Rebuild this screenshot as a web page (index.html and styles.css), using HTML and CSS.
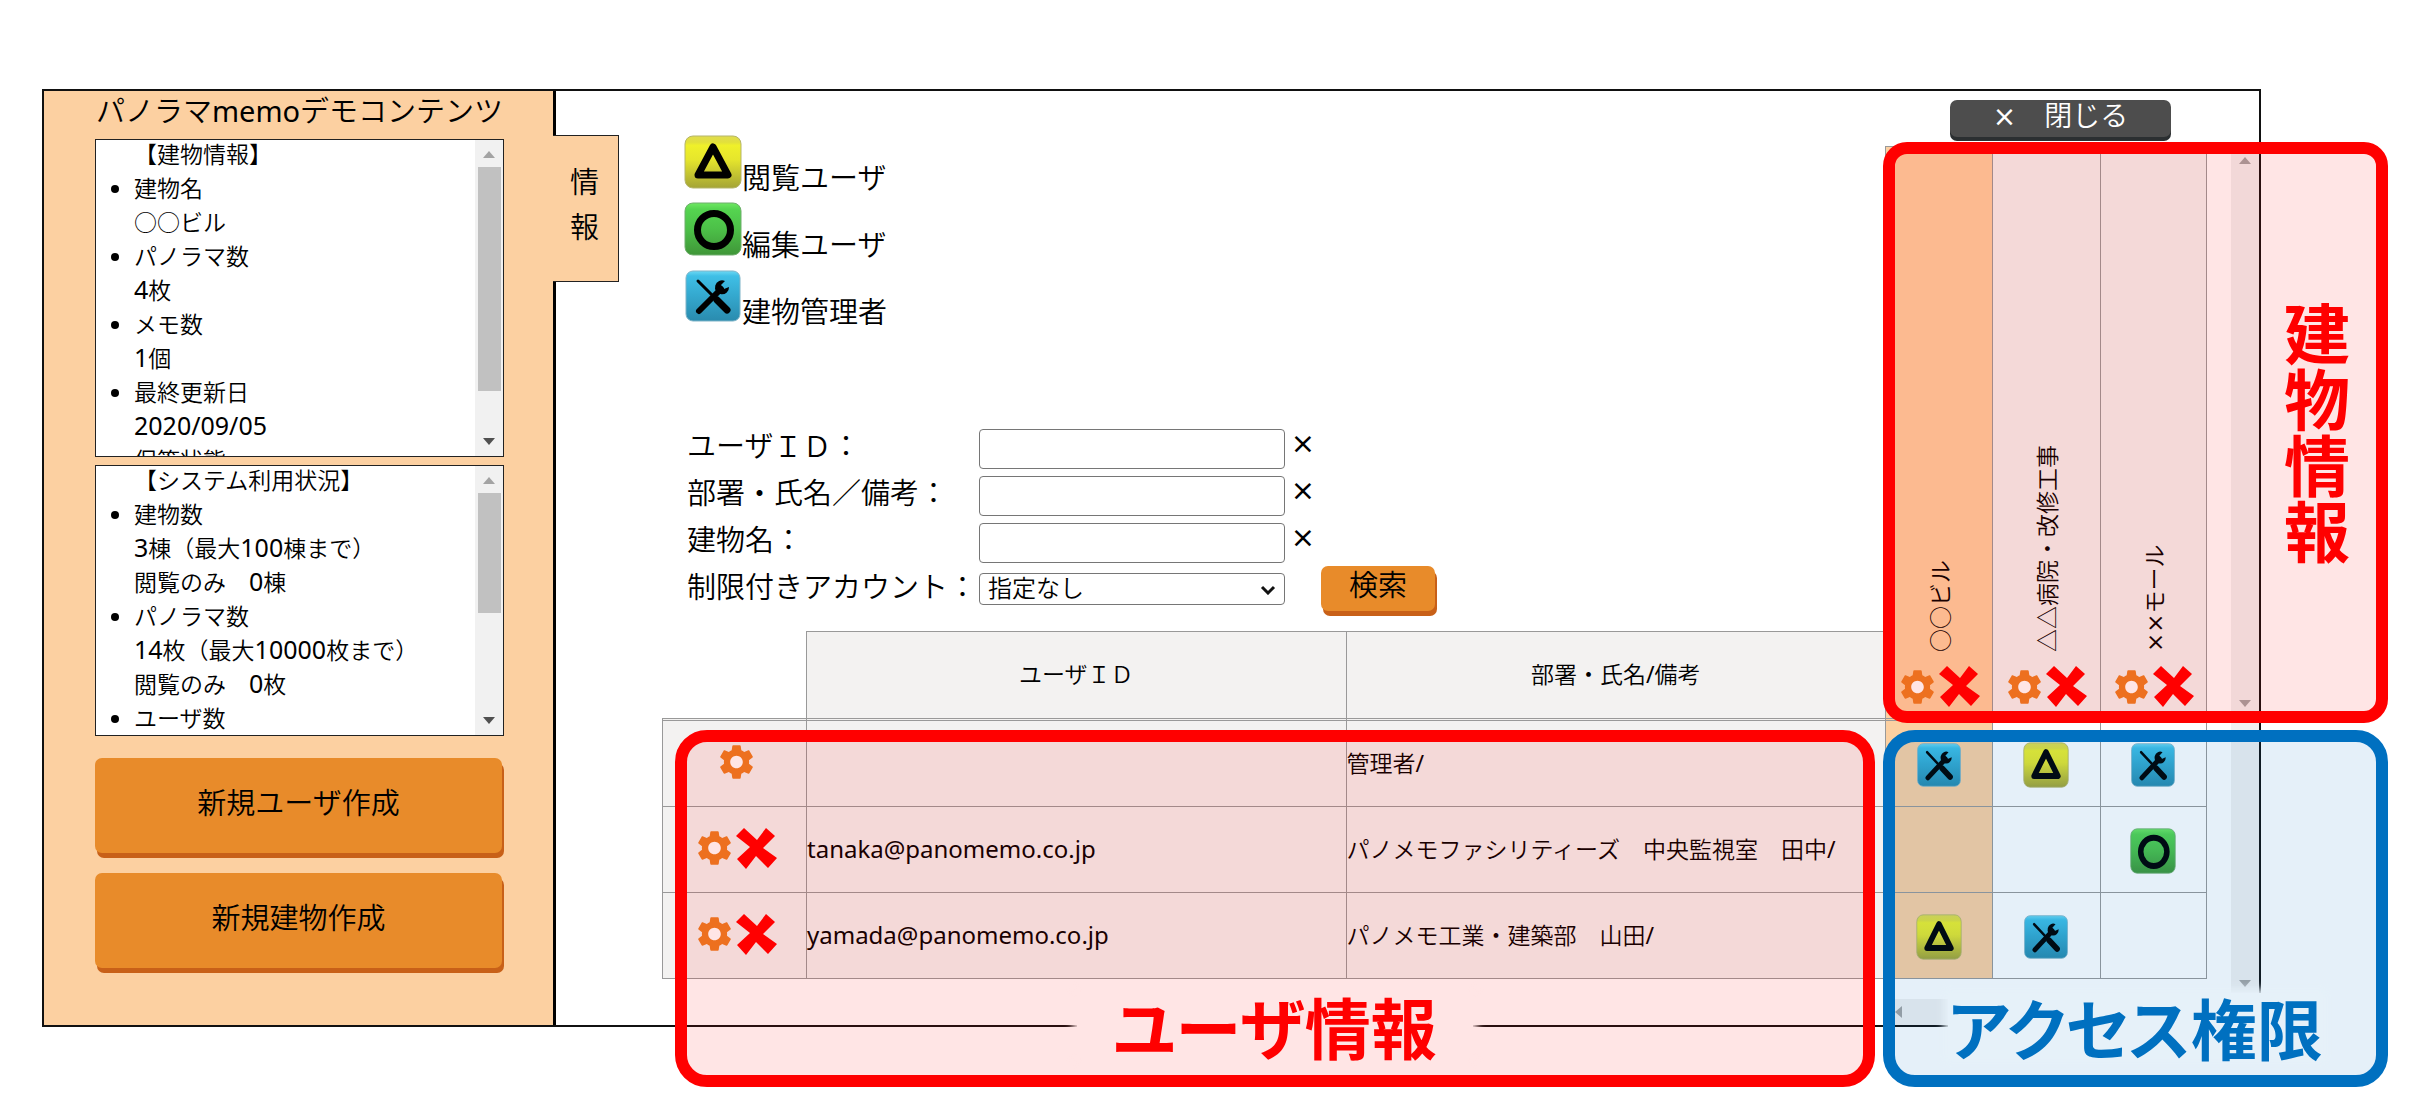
FILE: index.html
```html
<!DOCTYPE html>
<html lang="ja">
<head>
<meta charset="utf-8">
<title>パノラマmemo</title>
<link rel="stylesheet" href="styles.css">
</head>
<body>
<svg class="defs" aria-hidden="true">
  <defs>
    <linearGradient id="g-yellow" x1="0" y1="0" x2="0" y2="1"><stop offset="0" stop-color="#e0dc50"/><stop offset=".12" stop-color="#e2e03c"/><stop offset=".18" stop-color="#eff02a"/><stop offset=".45" stop-color="#e6e62c"/><stop offset="1" stop-color="#a4a436"/></linearGradient>
    <linearGradient id="g-green" x1="0" y1="0" x2="0" y2="1"><stop offset="0" stop-color="#6ee862"/><stop offset=".12" stop-color="#55d450"/><stop offset=".5" stop-color="#4cc048"/><stop offset="1" stop-color="#3f9638"/></linearGradient>
    <linearGradient id="g-blue" x1="0" y1="0" x2="0" y2="1"><stop offset="0" stop-color="#6cd8f4"/><stop offset=".1" stop-color="#3fbfe6"/><stop offset=".5" stop-color="#34a8ce"/><stop offset="1" stop-color="#2a8bae"/></linearGradient>
    <symbol id="i-view" viewBox="0 0 58 54" preserveAspectRatio="none">
      <rect x="1" y="1" width="56" height="52" rx="8" fill="url(#g-yellow)" stroke="#b5b56a"/>
      <path d="M29 12 L44 40 H14 Z" fill="none" stroke="#000" stroke-width="7" stroke-linejoin="round"/>
    </symbol>
    <symbol id="i-edit" viewBox="0 0 58 54" preserveAspectRatio="none">
      <rect x="1" y="1" width="56" height="52" rx="8" fill="url(#g-green)" stroke="#6fae6c"/>
      <circle cx="30" cy="28" r="16.500" fill="none" stroke="#000" stroke-width="7"/>
    </symbol>
    <symbol id="i-admin" viewBox="0 0 58 54" preserveAspectRatio="none">
      <rect x="2" y="2" width="54" height="50" rx="7" fill="url(#g-blue)" stroke="#7fb4c8"/>
      <path d="M14 12 L28 26" stroke="#000" stroke-width="3" stroke-linecap="round"/>
      <path d="M33 31 L43 41" stroke="#000" stroke-width="7" stroke-linecap="round"/>
      <path d="M15 42 L37 20" stroke="#000" stroke-width="6" stroke-linecap="round"/>
      <path d="M41 12 A7 7 0 1 0 45 18 L40 20 L37 16 Z" fill="#000"/>
    </symbol>
    <symbol id="i-gear" viewBox="2 2 20 20">
      <circle cx="12" cy="12" r="5" fill="#fff"/>
      <path fill="#eb7d23" d="M19.140 12.940c.04-.3.06-.61.06-.94 0-.32-.02-.64-.07-.94l2.030-1.580c.18-.14.23-.41.12-.61l-1.920-3.320c-.12-.22-.37-.29-.59-.22l-2.390.96c-.5-.38-1.030-.7-1.620-.94l-.36-2.540c-.04-.24-.24-.41-.48-.41h-3.840c-.24 0-.43.17-.47.41l-.36 2.540c-.59.24-1.130.57-1.620.94l-2.390-.96c-.22-.08-.47 0-.59.22L2.740 8.870c-.12.21-.08.47.12.61l2.030 1.580c-.05.3-.09.63-.09.94s.02.64.07.94l-2.030 1.580c-.18.14-.23.41-.12.61l1.920 3.320c.12.22.37.29.59.22l2.390-.96c.5.38 1.030.7 1.620.94l.36 2.540c.05.24.24.41.48.41h3.840c.24 0 .44-.17.47-.41l.36-2.540c.59-.24 1.130-.56 1.620-.94l2.390.96c.22.08.47 0 .59-.22l1.920-3.320c.12-.22.07-.47-.12-.61l-2.010-1.580zM12 15.600c-1.980 0-3.600-1.620-3.600-3.600s1.620-3.600 3.600-3.600 3.600 1.620 3.600 3.600-1.620 3.600-3.600 3.600z"/>
    </symbol>
    <symbol id="i-del" viewBox="0 0 41 41">
      <path fill="#f00" d="M8 0 L21 12 L30 0 L39 8 L27 20 L41 30 L32 40 L20 28 L10 41 L1 31 L14 19 L0 8 Z"/>
    </symbol>
  </defs>
</svg>

<div class="frame">
  <aside class="side">
    <h1 class="side-title">パノラマmemoデモコンテンツ</h1>
    <section class="panel panel-building">
      <ul class="panel-list">
        <li class="plain">【建物情報】</li>
        <li>建物名<br>○○ビル</li>
        <li>パノラマ数<br><span class="num">4</span>枚</li>
        <li><span class="strong">メモ</span>数<br><span class="num">1</span>個</li>
        <li>最終更新日<br><span class="num">2020/09/05</span></li>
        <li class="plain">保管状態</li>
      </ul>
      <div class="scroll"><i class="up"></i><b class="thumb thumb-long"></b><i class="down"></i></div>
    </section>
    <section class="panel panel-usage">
      <ul class="panel-list">
        <li class="plain">【システム利用状況】</li>
        <li>建物数<br><span class="num">3</span>棟（最大<span class="num">100</span>棟まで）<br>閲覧のみ　<span class="num">0</span>棟</li>
        <li>パノラマ数<br><span class="num">14</span>枚（最大<span class="num">10000</span>枚まで）<br>閲覧のみ　<span class="num">0</span>枚</li>
        <li>ユーザ数</li>
      </ul>
      <div class="scroll"><i class="up"></i><b class="thumb thumb-short"></b><i class="down"></i></div>
    </section>
    <button class="btn btn-big" type="button">新規ユーザ作成</button>
    <button class="btn btn-big" type="button">新規建物作成</button>
    <button class="tab" type="button">情報</button>
  </aside>

  <main class="main">
    <div class="left">
      <ul class="legend">
        <li><svg class="legend-icon"><use href="#i-view"/></svg><span>閲覧ユーザ</span></li>
        <li><svg class="legend-icon"><use href="#i-edit"/></svg><span>編集ユーザ</span></li>
        <li><svg class="legend-icon"><use href="#i-admin"/></svg><span>建物管理者</span></li>
      </ul>
      <form class="search">
        <label for="uid">ユーザＩＤ：</label><input id="uid" type="text"><button class="clear" type="button" aria-label="ユーザＩＤをクリア">×</button>
        <label for="dept">部署・氏名／備考：</label><input id="dept" type="text"><button class="clear" type="button" aria-label="部署をクリア">×</button>
        <label for="bld">建物名：</label><input id="bld" type="text"><button class="clear" type="button" aria-label="建物名をクリア">×</button>
        <label for="lim">制限付きアカウント：</label>
        <div class="select"><select id="lim"><option>指定なし</option></select><svg viewBox="0 0 16 10"><path d="M2 2 L8 8 L14 2" fill="none" stroke="#111" stroke-width="3"/></svg></div>
        <button class="btn btn-search" type="button">検索</button>
      </form>
      <div class="users">
        <table class="user-table">
          <colgroup><col class="c-act"><col><col></colgroup>
          <thead><tr><td class="blank"></td><th>ユーザＩＤ</th><th>部署・氏名/備考</th></tr></thead>
          <tbody>
            <tr><td class="act"><button type="button" aria-label="設定"><svg class="gear"><use href="#i-gear"/></svg></button></td><td></td><td>管理者/</td></tr>
            <tr><td class="act"><button type="button" aria-label="設定"><svg class="gear"><use href="#i-gear"/></svg></button><button type="button" aria-label="削除"><svg class="del"><use href="#i-del"/></svg></button></td><td class="mail">tanaka@panomemo.co.jp</td><td>パノメモファシリティーズ　中央監視室　田中/</td></tr>
            <tr><td class="act"><button type="button" aria-label="設定"><svg class="gear"><use href="#i-gear"/></svg></button><button type="button" aria-label="削除"><svg class="del"><use href="#i-del"/></svg></button></td><td class="mail">yamada@panomemo.co.jp</td><td>パノメモ工業・建築部　山田/</td></tr>
          </tbody>
        </table>
        <div class="mark mark-user"><span class="mark-label">ユーザ情報</span></div>
      </div>
    </div>

    <div class="right">
      <button class="close" type="button"><span class="x">×</span>　閉じる</button>
      <div class="matrix">
        <div class="matrix-row">
          <table class="perm-table">
            <thead><tr>
              <th class="cur"><div class="bld"><span class="bld-name">○○ビル</span><span class="bld-act"><button type="button" aria-label="設定"><svg class="gear"><use href="#i-gear"/></svg></button><button type="button" aria-label="削除"><svg class="del"><use href="#i-del"/></svg></button></span></div></th>
              <th><div class="bld"><span class="bld-name">△△病院・改修工事</span><span class="bld-act"><button type="button" aria-label="設定"><svg class="gear"><use href="#i-gear"/></svg></button><button type="button" aria-label="削除"><svg class="del"><use href="#i-del"/></svg></button></span></div></th>
              <th><div class="bld"><span class="bld-name"><span class="x">××</span>モール</span><span class="bld-act"><button type="button" aria-label="設定"><svg class="gear"><use href="#i-gear"/></svg></button><button type="button" aria-label="削除"><svg class="del"><use href="#i-del"/></svg></button></span></div></th>
            </tr></thead>
            <tbody>
              <tr><td class="cur"><svg class="perm"><use href="#i-admin"/></svg></td><td><svg class="perm"><use href="#i-view"/></svg></td><td><svg class="perm"><use href="#i-admin"/></svg></td></tr>
              <tr><td class="cur"></td><td></td><td><svg class="perm"><use href="#i-edit"/></svg></td></tr>
              <tr><td class="cur"><svg class="perm"><use href="#i-view"/></svg></td><td><svg class="perm"><use href="#i-admin"/></svg></td><td></td></tr>
            </tbody>
          </table>
          <div class="tracks">
            <div class="track track-head"><i class="up"></i><i class="down"></i></div>
            <div class="track track-body"><i class="down"></i></div>
          </div>
        </div>
        <div class="track-x"><i class="back"></i></div>
        <div class="mark mark-building"><span class="mark-label">建物情報</span></div>
        <div class="mark mark-access"><span class="mark-label">アクセス権限</span></div>
      </div>
    </div>
  </main>
</div>
</body>
</html>
```
FILE: styles.css
```css
* { box-sizing: border-box; }
body {
  margin: 0;
  padding: 89px 155px 92px 42px;
  background: #fff;
  color: #000;
  font-family: "Noto Sans", "Noto Sans CJK JP DemiLight", "Noto Sans CJK JP Light", "Noto Sans CJK JP", sans-serif;
  font-size: 23px;
  font-weight: 400;
}
button, input, select { font: inherit; color: inherit; }
button { padding: 0; border: 0; background: none; cursor: pointer; }
ul { margin: 0; padding: 0; }
.defs { position: absolute; width: 0; height: 0; }
.x { font-family: "DejaVu Sans", sans-serif; }

.frame { display: flex; border: 2px solid #111; }

/* sidebar */
.side {
  position: relative;
  flex: 0 0 512px;
  display: flex;
  flex-direction: column;
  padding: 0 49px 56px 51px;
  background: #fcd0a1;
  border-right: 3px solid #000;
}
.side-title {
  margin: 0;
  height: 48px;
  font-size: 29px;
  font-weight: 400;
  line-height: 40px;
  text-align: center;
  white-space: nowrap;
}
.panel {
  display: flex;
  background: #fff;
  border: 1px solid #222;
  overflow: hidden;
}
.panel-building { height: 318px; }
.panel-usage { height: 271px; margin-top: 8px; }
.panel-list { flex: 1; margin-top: -3px; padding-left: 38px; line-height: 34px; white-space: nowrap; }
.panel-list .plain { list-style: none; }
.strong { font-weight: 500; }
.num { font-size: 25px; line-height: 30px; }
.scroll {
  display: flex;
  flex-direction: column;
  align-items: center;
  width: 28px;
  padding: 11px 0;
  background: #f1f1f1;
}
.up, .down { border: 6px solid transparent; width: 0; height: 0; }
.up { border-top: 0; border-bottom: 7px solid #a3a3a3; }
.down { border-bottom: 0; border-top: 7px solid #505050; }
.scroll .down { margin-top: auto; }
.thumb { width: 23px; margin-top: 9px; background: #c1c1c1; }
.thumb-long { height: 224px; }
.thumb-short { height: 120px; }
.tab {
  position: absolute;
  top: 44px;
  left: 509px;
  width: 66px;
  height: 147px;
  padding: 0 19px 9px 17px;
  border: 1px solid #222;
  border-left: 0;
  background: #fcd0a1;
  font-size: 29px;
  line-height: 45px;
  word-break: break-all;
}

.btn {
  background: #e88b2a;
  border-radius: 7px;
  box-shadow: 2px 5px 0 #c86018;
}
.btn-big { height: 95px; margin: 22px 2px 0 0; padding-bottom: 10px; font-size: 29px; }
.btn-big + .btn-big { margin-top: 20px; }

/* main area */
.main { flex: 1; display: flex; padding-left: 106px; }
.left { flex: 1; padding-top: 44px; }
.legend { list-style: none; padding-left: 22px; font-size: 29px; }
.legend li { display: flex; height: 67px; }
.legend span { padding-top: 24px; line-height: 38px; }
.legend-icon { width: 58px; height: 54px; }

.search {
  display: grid;
  grid-template-columns: 292px 306px 36px 114px;
  grid-template-rows: repeat(4, 40px);
  row-gap: 7px;
  margin: 93px 0 21px 25px;
  font-size: 29px;
}
.search label { grid-column: 1; line-height: 34px; white-space: nowrap; }
.search input {
  height: 40px;
  padding: 0 8px;
  border: 1px solid #767676;
  border-radius: 4px;
  font-size: 23px;
}
.clear { align-self: start; font: 400 29px/28px "DejaVu Sans", sans-serif; }
.select { position: relative; align-self: start; height: 32px; margin-top: 3px; }
.select select {
  display: block;
  width: 100%;
  height: 100%;
  padding: 0 8px 2px;
  border: 1px solid #767676;
  border-radius: 4px;
  background: #fff;
  appearance: none;
  font-size: 24px;
  line-height: 28px;
}
.select svg { position: absolute; right: 9px; top: 12px; width: 16px; height: 10px; pointer-events: none; }
.btn-search { grid-column: 4; height: 45px; margin-top: -4px; padding-bottom: 8px; line-height: 36px; }

/* tables */
table { border-collapse: separate; border-spacing: 0; table-layout: fixed; }
th, td { padding: 0; font-weight: 400; }
.users { position: relative; }
.user-table { width: 100%; }
.c-act { width: 144px; }
.user-table th { height: 87px; padding-bottom: 5px; background: #f3f2f1; border: 1px solid #999; border-width: 1px 0 0 1px; }
.user-table tbody td { height: 86px; padding-bottom: 3px; background: #f3f2f1; border: 1px solid #999; border-width: 0 0 1px 1px; white-space: nowrap; }
.user-table tbody tr:first-child td,
.perm-table tbody tr:first-child td { height: 89px; border-top: 3px double #999; }
.user-table .mail { font-size: 24px; }
.user-table tbody .act { padding-left: 4px; text-align: center; }
.act button, .bld-act button { display: inline-block; vertical-align: middle; line-height: 0; }
.act button + button, .bld-act button + button { margin-left: 4px; }
.gear { width: 35px; height: 36px; }
.del { width: 41px; height: 41px; }

.right { flex: 0 0 374px; padding-top: 9px; }
.close {
  display: block;
  width: 221px;
  height: 37px;
  margin: 0 0 9px 65px;
  padding-bottom: 6px;
  border-radius: 7px;
  background: #4d4d4d;
  box-shadow: 0 4px 0 #2b2f31;
  color: #fff;
  font-size: 28px;
  line-height: 30px;
}
.matrix { position: relative; }
.matrix-row { display: flex; justify-content: space-between; }
.perm-table { width: 322px; }
.perm-table th { height: 572px; background: #f3f2f1; border: 1px solid #999; border-width: 1px 0 0 1px; vertical-align: bottom; }
.perm-table td { height: 86px; padding-top: 3px; border: 1px solid #999; border-width: 0 0 1px 1px; text-align: center; line-height: 0; }
.perm-table th:last-child, .perm-table td:last-child { border-right-width: 1px; }
.perm-table .cur { background: #fcd0a1; }
.perm { width: 46px; height: 46px; }
.bld { display: flex; flex-direction: column; align-items: center; gap: 14px; padding: 0 0 11px 2px; }
.bld-name { width: 32px; height: 32px; line-height: 32px; text-align: left; white-space: nowrap; transform: rotate(-90deg); }
.bld-act { white-space: nowrap; line-height: 0; }

.tracks { display: flex; flex-direction: column; }
.track { display: flex; flex-direction: column; align-items: center; width: 28px; background: #f1f1f1; }
.track-head { height: 572px; padding: 11px 0; }
.track-head .down { margin-top: auto; border-top-color: #a3a3a3; }
.track-body { flex: 1; margin-bottom: -20px; justify-content: flex-end; padding-bottom: 12px; }
.track-body .down { border-top-color: #a3a3a3; }
.track-x { display: flex; align-items: center; width: 345px; height: 26px; margin-top: 20px; padding-left: 10px; background: #f1f1f1; }
.back { border: 6px solid transparent; border-left: 0; border-right: 7px solid #a3a3a3; }

/* callouts over the tables */
.mark { position: absolute; display: flex; justify-content: center; border: 12px solid; border-radius: 32px; pointer-events: none; }
.mark-label { font-family: "Noto Sans CJK JP", sans-serif; font-size: 66px; font-weight: 700; line-height: 66px; white-space: nowrap; font-feature-settings: "palt"; }
.mark-user { left: 13px; right: 10px; top: 99px; height: 357px; color: #f00; background: rgba(255, 0, 0, .1); align-items: flex-end; }
.mark-user .mark-label { margin-bottom: 17px; padding: 0 36px; background: #ffe5e5; box-shadow: 0 0 8px 4px #ffe5e5; }
.mark-building { left: -2px; right: -129px; top: -4px; height: 581px; border-radius: 24px; color: #f00; background: rgba(255, 0, 0, .1); justify-content: flex-end; align-items: center; }
.mark-building .mark-label { writing-mode: vertical-rl; margin-right: 26px; font-feature-settings: normal; }
.mark-access { left: -2px; right: -129px; top: 584px; height: 357px; color: #0070c0; background: rgba(0, 112, 192, .1); align-items: flex-end; }
.mark-access .mark-label { margin-bottom: 16px; background: #e6f1f9; box-shadow: 0 0 8px 4px #e6f1f9; }
```
